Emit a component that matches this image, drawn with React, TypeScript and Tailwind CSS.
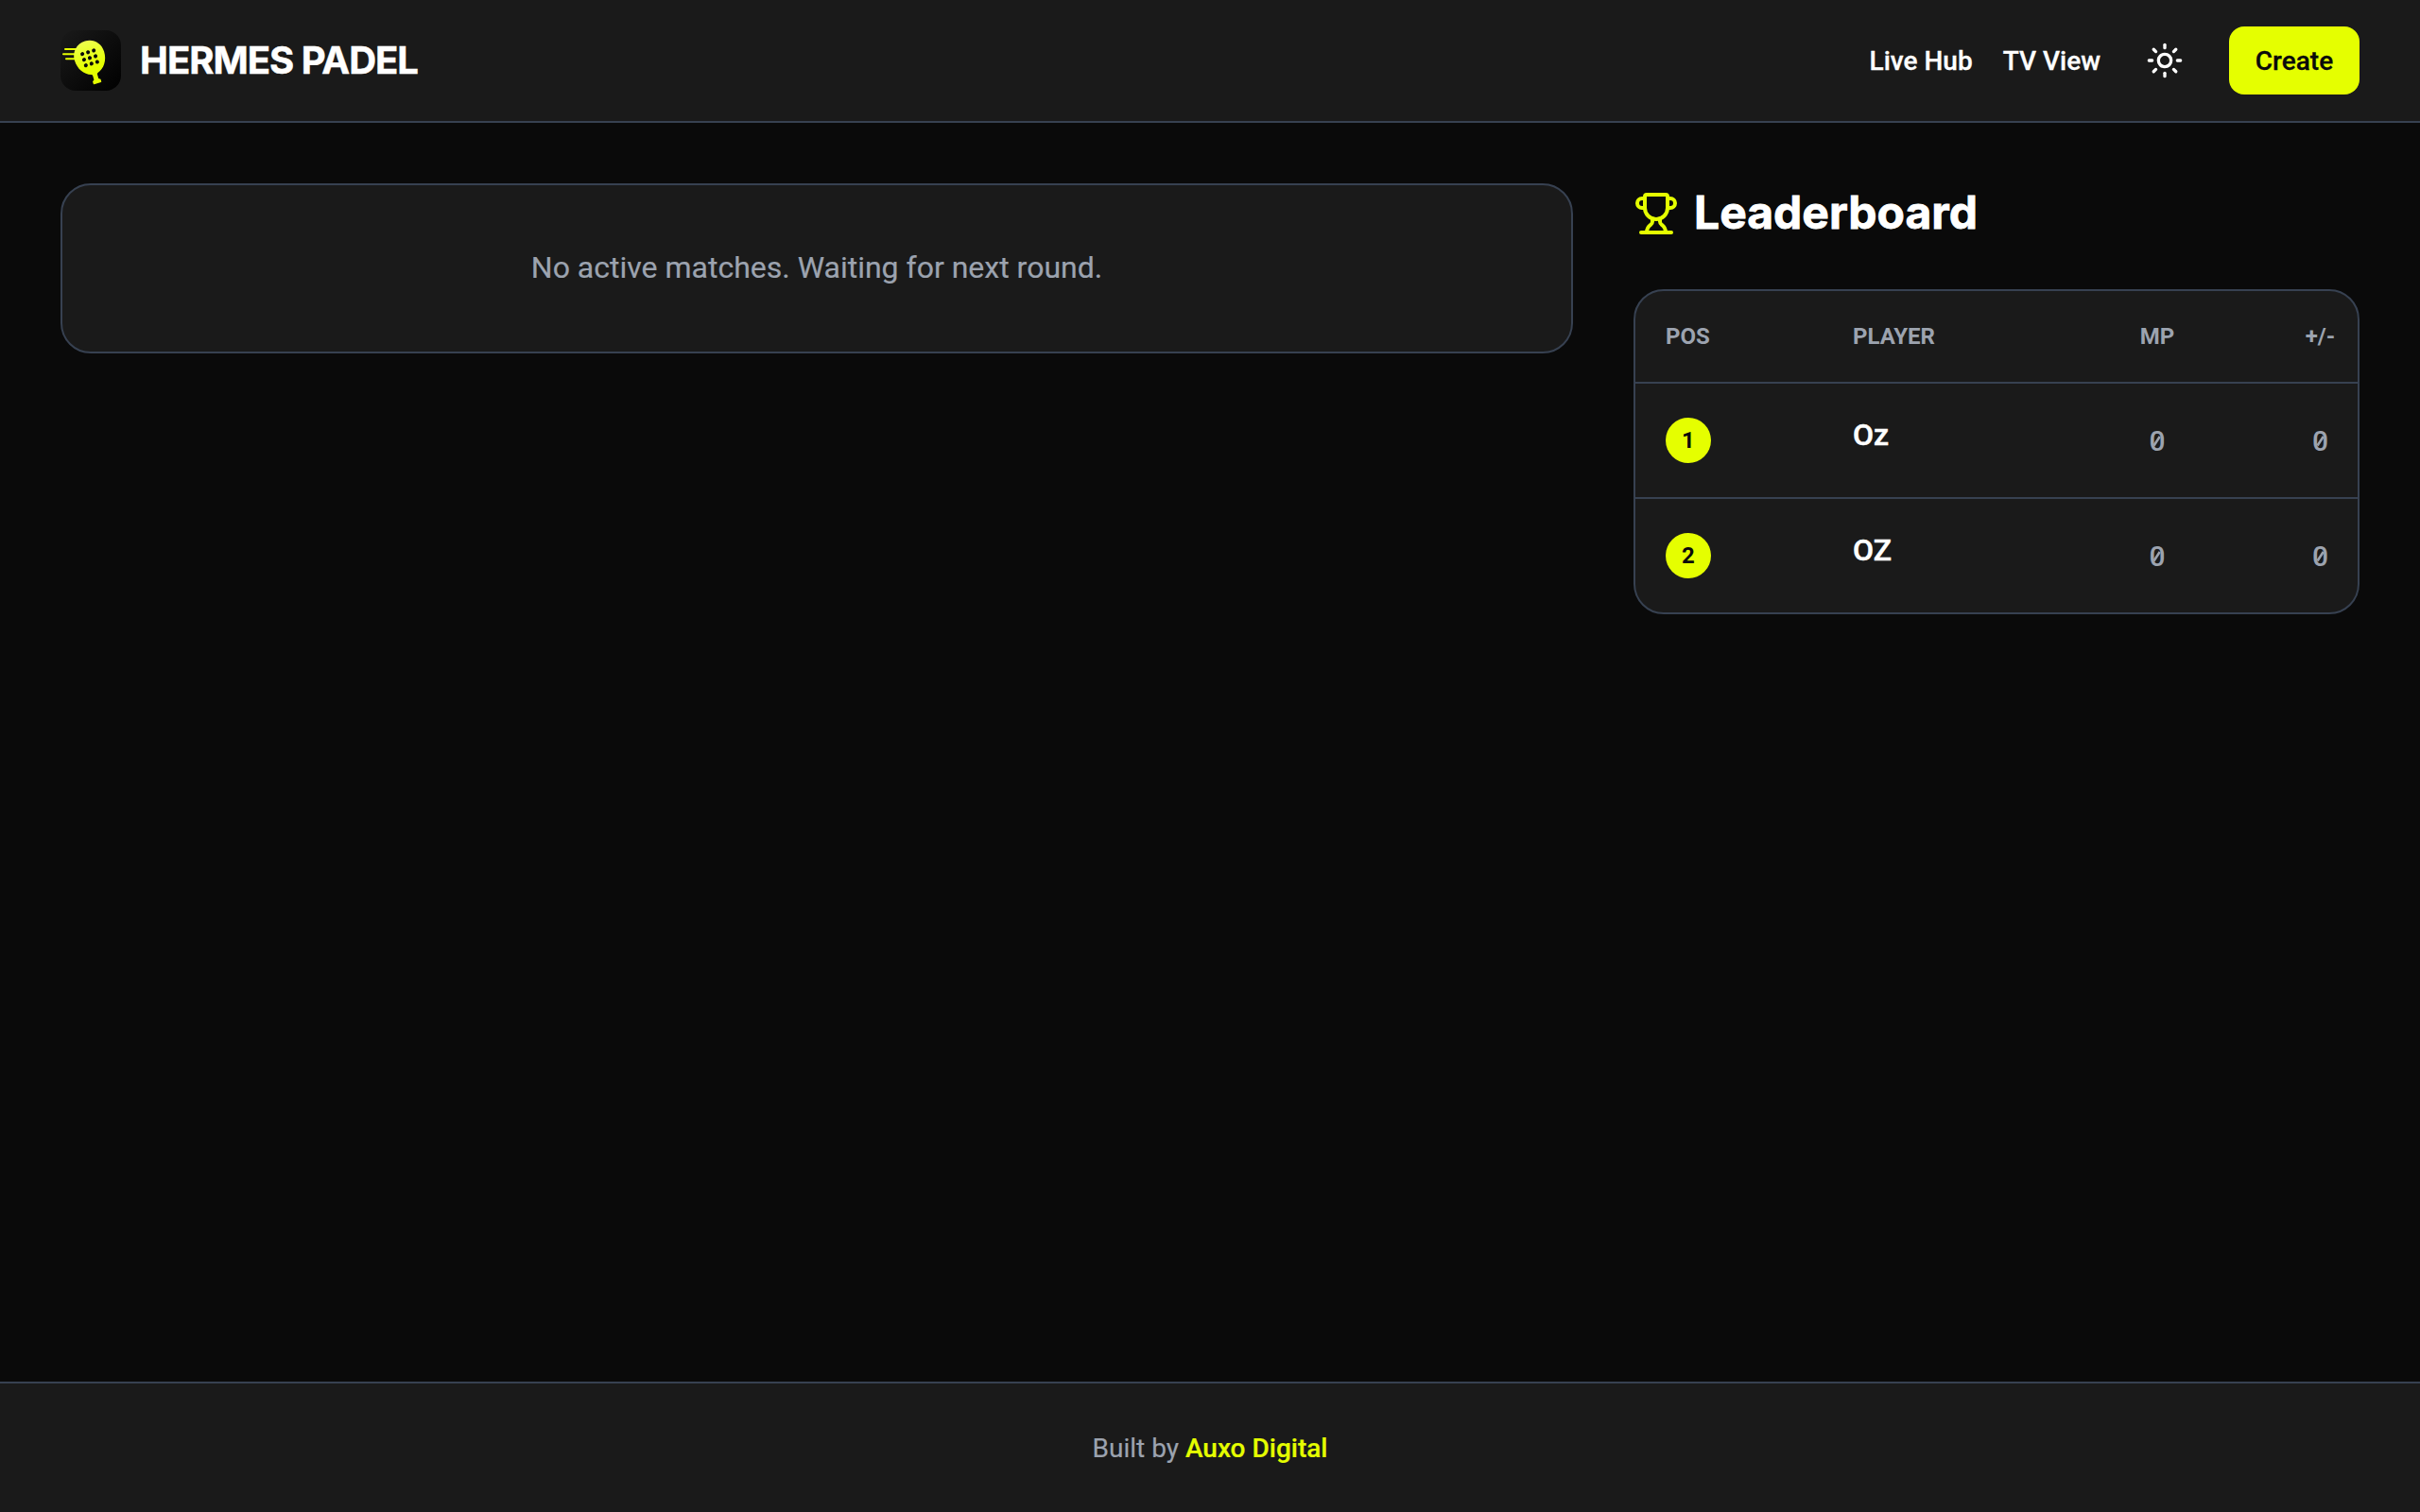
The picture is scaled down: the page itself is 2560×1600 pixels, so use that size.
import { Sun, Trophy } from "lucide-react";

const players = [
  { pos: 1, name: "Oz", mp: 0, diff: 0 },
  { pos: 2, name: "OZ", mp: 0, diff: 0 },
];

function Logo() {
  const dots = [-6.3, 0, 6.3];
  return (
    <svg viewBox="0 0 64 64" className="size-16" aria-hidden="true">
      <defs>
        <linearGradient id="tile" x1="0" y1="0" x2="1" y2="1">
          <stop offset="0" stopColor="#1a1a1a" />
          <stop offset="1" stopColor="#000000" />
        </linearGradient>
        <linearGradient id="racket" x1="0" y1="0" x2="0" y2="1">
          <stop offset="0" stopColor="#ecff4d" />
          <stop offset="0.6" stopColor="#e5ff00" />
        </linearGradient>
      </defs>
      <rect width="64" height="64" rx="16" fill="url(#tile)" />
      <path d="M5 20H17M3 25.2H17M6 30.3H17" stroke="#e5ff00" strokeWidth="2" strokeLinecap="round" />
      <g transform="translate(31 29.3) rotate(-17)">
        <path
          d="M0.3-18.4C9.5-18.4 16.4-11.3 16.4-2C16.4 7.5 11 15.5 3.2 17.6L2.5 18.6V23.4L4.4 24.8V27.4Q4.4 28 3.8 28H-3.8Q-4.4 28-4.4 27.4V24.8L-2.5 23.4V18.6L-3.2 17.6C-11 15.5-16.2 7.5-16.2-2C-16.2-11.3-9-18.4 0.3-18.4Z"
          fill="url(#racket)"
        />
        {dots.map((y) =>
          dots.map((x) => <circle key={`${x},${y}`} cx={x} cy={y} r="2.05" fill="#0a0a0a" />),
        )}
      </g>
    </svg>
  );
}

function Stat({ value }: { value: number }) {
  return (
    <span className="relative inline-block pt-0.5 text-[30px] leading-9 font-medium text-[#9ca3af]">
      {value}
      {value === 0 && (
        <svg viewBox="0 0 16 36" className="absolute inset-x-0 bottom-0 h-9 w-full" aria-hidden="true">
          <path d="M5 22.5L11.2 13" stroke="currentColor" strokeWidth="2.6" />
        </svg>
      )}
    </span>
  );
}

export default function App() {
  return (
    <div className="flex h-[1600px] w-[2560px] flex-col bg-[#0a0a0a] font-['Roboto',sans-serif] text-white">
      <header className="flex h-[130px] items-center justify-between border-b-2 border-[#374151] bg-[#1a1a1a] px-16">
        <div className="flex items-center gap-5">
          <Logo />
          <span className="font-['Inter',sans-serif] text-[40px] font-bold tracking-tight [-webkit-text-stroke:0.5px_white]">
            HERMES PADEL
          </span>
        </div>
        <nav className="flex items-center text-[28px] font-medium [-webkit-text-stroke:0.3px]">
          <a className="mr-8 pt-0.5">Live Hub</a>
          <a className="mr-12 pt-0.5">TV View</a>
          <Sun size={40} className="mr-12" />
          <button className="h-[72px] w-[138px] rounded-2xl bg-[#e5ff00] pt-0.5 text-[#0a0a0a]">Create</button>
        </nav>
      </header>

      <main className="flex flex-1 items-start gap-16 px-16 pt-16">
        <section className="flex h-[180px] w-[1600px] items-center justify-center rounded-[32px] border-2 border-[#374151] bg-[#1a1a1a]">
          <p className="pb-0.5 text-[32px] text-[#9ca3af] [-webkit-text-stroke:0.2px]">
            No active matches. Waiting for next round.
          </p>
        </section>

        <aside className="w-[768px]">
          <h2 className="mb-12 flex h-16 items-center gap-4 font-['Inter',sans-serif] text-[48px] font-bold">
            <Trophy size={48} className="text-[#e5ff00]" />
            <span className="pb-0.5 [-webkit-text-stroke:0.8px_white]">Leaderboard</span>
          </h2>
          <div className="rounded-[32px] border-2 border-[#374151] bg-[#1a1a1a]">
            <div className="grid h-[96px] grid-cols-[198px_268px_172px_126px] items-center text-[24px] font-bold text-[#9ca3af]">
              <span className="pl-8">POS</span>
              <span className="pl-8">PLAYER</span>
              <span className="text-center">MP</span>
              <span className="pl-[47px] text-center">+/-</span>
            </div>
            {players.map((p) => (
              <div
                key={p.pos}
                className="grid h-[122px] grid-cols-[198px_268px_172px_126px] items-center border-t-2 border-[#374151]"
              >
                <span className="ml-8 flex size-12 items-center justify-center rounded-full bg-[#e5ff00] text-[24px] font-bold text-[#0a0a0a]">
                  {p.pos}
                </span>
                <span className="pb-3 pl-8 text-[32px] font-medium [-webkit-text-stroke:0.5px_white]">{p.name}</span>
                <span className="text-center">
                  <Stat value={p.mp} />
                </span>
                <span className="pl-[47px] text-center">
                  <Stat value={p.diff} />
                </span>
              </div>
            ))}
          </div>
        </aside>
      </main>

      <footer className="flex h-[138px] items-center justify-center border-t-2 border-[#374151] bg-[#1a1a1a] text-[28px]">
        <p className="pt-0.5 text-[#9ca3af] [-webkit-text-stroke:0.2px]">
          Built by <a className="font-medium text-[#e5ff00]">Auxo Digital</a>
        </p>
      </footer>
    </div>
  );
}
